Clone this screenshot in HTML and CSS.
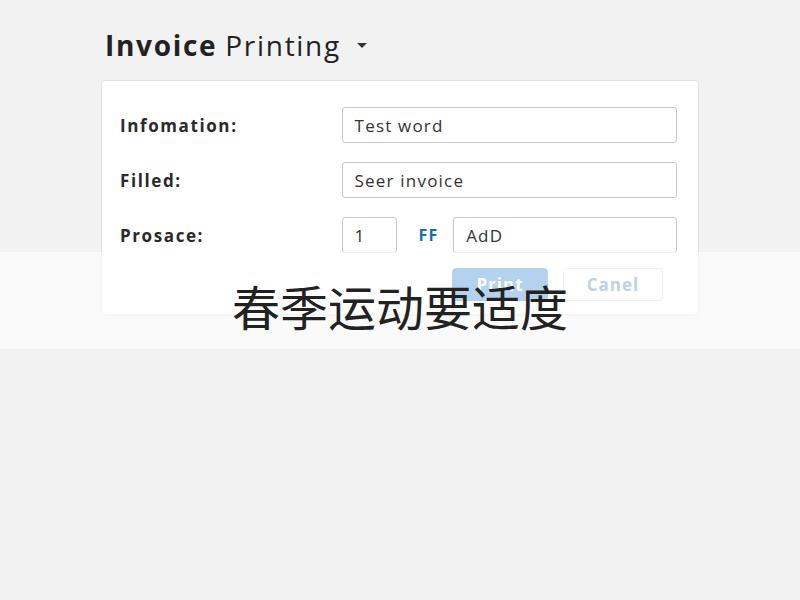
FILE: index.html
```html
<!DOCTYPE html>
<html>
<head>
<meta charset="utf-8">
<link rel="stylesheet" href="styles.css">
</head>
<body>
<div class="page">
  <h1 class="title"><b>Invoice</b> Printing <span class="caret"></span></h1>
  <div class="card">
    <div class="row">
      <div class="label">Infomation:</div>
      <div class="field wide">Test word</div>
    </div>
    <div class="row">
      <div class="label">Filled:</div>
      <div class="field wide">Seer invoice</div>
    </div>
    <div class="row">
      <div class="label">Prosace:</div>
      <div class="group">
        <div class="field small">1</div>
        <span class="ff">FF</span>
        <div class="field grow">AdD</div>
      </div>
    </div>
    <div class="actions">
      <button class="btn primary">Print</button>
      <button class="btn secondary">Canel</button>
    </div>
  </div>
</div>
<div class="band"><span class="band-text">春季运动要适度</span></div>
</body>
</html>
```
FILE: styles.css
```css
html, body {
  margin: 0;
  padding: 0;
}
body {
  background: #f2f2f2;
  font-family: "Open Sans", "Liberation Sans", sans-serif;
  color: #333;
  width: 800px;
  height: 600px;
  overflow: hidden;
  position: relative;
}
.page {
  padding: 24px 101px 0 101px;
}
.title {
  margin: 0 0 14px 4px;
  font-size: 28px;
  font-weight: 400;
  color: #222;
  line-height: 42px;
  letter-spacing: 1.7px;
  display: flex;
  align-items: center;
}
.title b {
  font-weight: 700;
  margin-right: 8px;
}
.caret {
  display: inline-block;
  width: 0;
  height: 0;
  border-left: 5px solid transparent;
  border-right: 5px solid transparent;
  border-top: 5px solid #333;
  margin-left: 16px;
  margin-top: 0;
}
.card {
  background: #fff;
  border: 1px solid #e2e2e2;
  border-radius: 4px;
  padding: 26px 21px 13px 18px;
  display: flex;
  flex-direction: column;
  gap: 19px;
  box-shadow: 0 1px 2px rgba(0,0,0,0.04);
}
.row {
  display: flex;
  align-items: center;
}
.label {
  width: 222px;
  font-weight: 700;
  font-size: 17px;
  letter-spacing: 1.6px;
  color: #2a2a2a;
}
.field {
  box-sizing: border-box;
  height: 36px;
  border: 1px solid #c8c8c8;
  border-radius: 3px;
  padding: 0 12px;
  display: flex;
  align-items: center;
  font-size: 17px;
  letter-spacing: 1.2px;
  color: #333;
  background: #fff;
}
.wide {
  width: 336px;
}
.group {
  display: flex;
  align-items: center;
  width: 336px;
}
.small {
  width: 55px;
}
.ff {
  color: #1b6db3;
  font-weight: 700;
  font-size: 16px;
  letter-spacing: 1px;
  margin: 0 15px 0 22px;
}
.grow {
  flex: 1;
}
.actions {
  display: flex;
  justify-content: flex-end;
  gap: 15px;
  padding-right: 14px;
  margin-top: -4px;
}
.btn {
  font-family: "Open Sans", "Liberation Sans", sans-serif;
  font-weight: 700;
  font-size: 17px;
  letter-spacing: 1px;
  height: 33px;
  border-radius: 4px;
  cursor: pointer;
}
.primary {
  width: 96px;
  background: #3a8ad0;
  border: 1px solid #3a8ad0;
  color: #fff;
}
.secondary {
  width: 100px;
  background: #fff;
  border: 1px solid #d8d8d8;
  color: #4d87b9;
}
.band {
  position: absolute;
  left: 0;
  top: 252px;
  width: 800px;
  height: 97px;
  background: rgba(255,255,255,0.62);
  display: flex;
  align-items: center;
  justify-content: center;
}
.band-text {
  font-family: "Noto Sans CJK SC", sans-serif;
  font-size: 48px;
  color: #222;
  line-height: 1;
  margin-top: 8px;
}
```
